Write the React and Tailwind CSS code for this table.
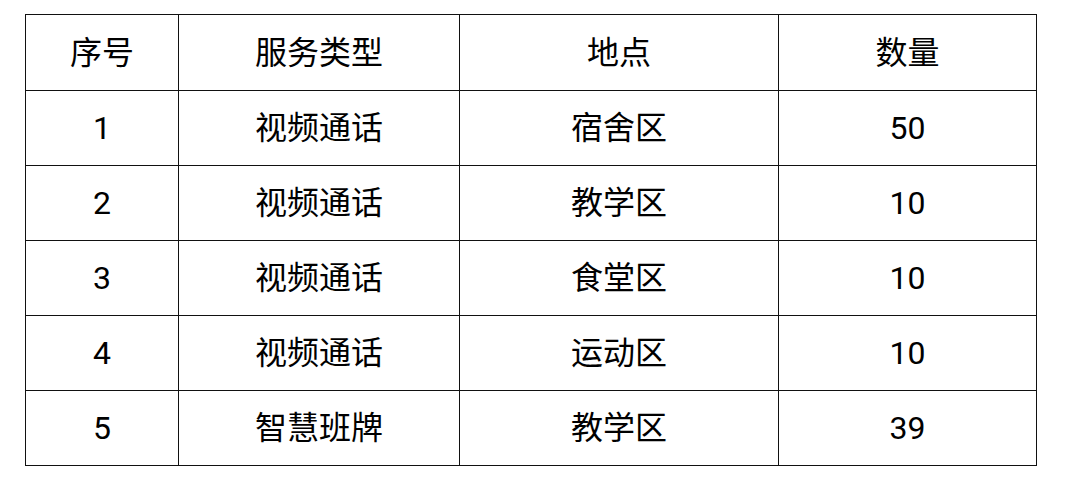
const rows = [
  ["1", "视频通话", "宿舍区", "50"],
  ["2", "视频通话", "教学区", "10"],
  ["3", "视频通话", "食堂区", "10"],
  ["4", "视频通话", "运动区", "10"],
  ["5", "智慧班牌", "教学区", "39"],
];

const head = ["序号", "服务类型", "地点", "数量"];

export default function App() {
  return (
    <div
      className="w-[1080px] h-[486px] bg-white pl-[25px] pt-[14px]"
      style={{ fontFamily: 'Roboto, "Noto Sans CJK SC", sans-serif' }}
    >
      <table className="border-collapse text-[32px] leading-none text-black">
        <colgroup>
          <col className="w-[153px]" />
          <col className="w-[281px]" />
          <col className="w-[319px]" />
          <col className="w-[258px]" />
        </colgroup>
        <thead>
          <tr className="h-[76px]">
            {head.map((h) => (
              <th key={h} className="border border-[#111] font-normal text-center p-0">
                {h}
              </th>
            ))}
          </tr>
        </thead>
        <tbody>
          {rows.map((r) => (
            <tr key={r[0]} className="h-[75px]">
              {r.map((c, i) => (
                <td key={i} className="border border-[#111] text-center p-0">
                  {c}
                </td>
              ))}
            </tr>
          ))}
        </tbody>
      </table>
    </div>
  );
}
